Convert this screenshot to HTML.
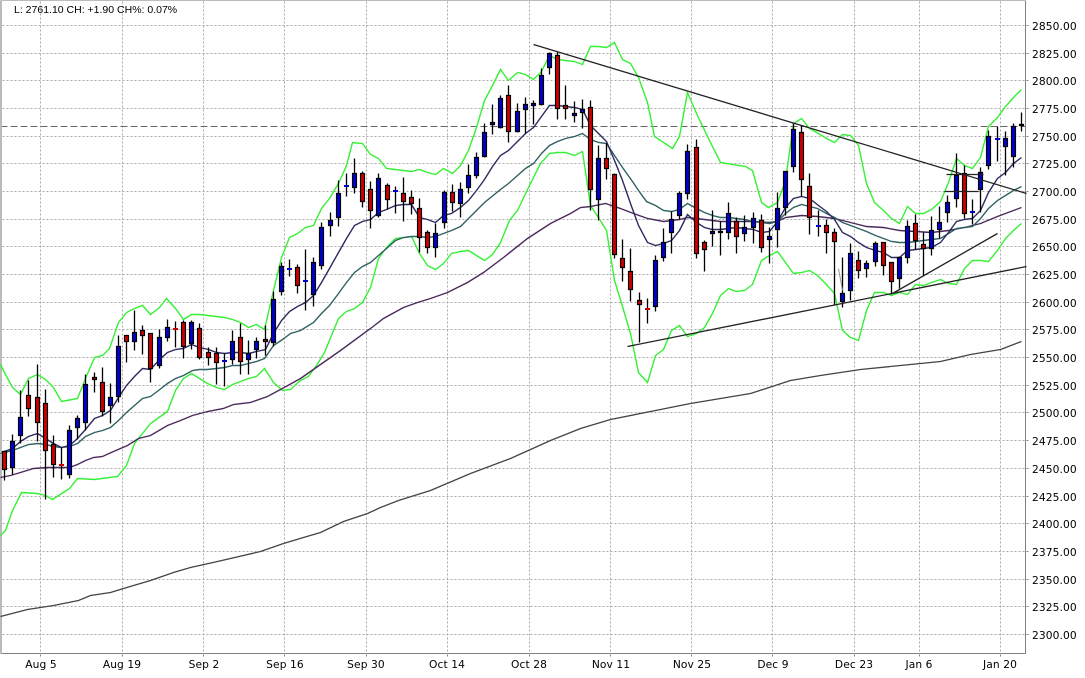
<!DOCTYPE html>
<html><head><meta charset="utf-8"><style>
html,body{margin:0;padding:0;background:#fff;width:1085px;height:678px;overflow:hidden}
svg{display:block}
text{fill:#000}
.a{font:10.67px "DejaVu Sans",sans-serif;letter-spacing:.1px}
.t{font:10.5px "Liberation Sans",sans-serif}
</style></head><body>
<svg width="1085" height="678" viewBox="0 0 1085 678" xmlns="http://www.w3.org/2000/svg">
<rect width="1085" height="678" fill="#fff"/>
<g transform="translate(.5 .5)" fill="none">
<path shape-rendering="crispEdges" stroke="#aaa" stroke-dasharray="2 2" d="M2 25H1025M2 53H1025M2 80H1025M2 108H1025M2 136H1025M2 163H1025M2 191H1025M2 219H1025M2 246H1025M2 274H1025M2 302H1025M2 329H1025M2 357H1025M2 385H1025M2 412H1025M2 440H1025M2 468H1025M2 496H1025M2 523H1025M2 551H1025M2 579H1025M2 606H1025M2 634H1025M40 1V653M122 1V653M203 1V653M284 1V653M366 1V653M447 1V653M529 1V653M610 1V653M691 1V653M772 1V653M854 1V653M919 1V653M1000 1V653"/>
<path shape-rendering="crispEdges" stroke="#666" stroke-dasharray="7 3" d="M0 126H1025"/>
<path shape-rendering="crispEdges" stroke="#808080" d="M1025 0V653H0M1026 25h2M1026 53h2M1026 80h2M1026 108h2M1026 136h2M1026 163h2M1026 191h2M1026 219h2M1026 246h2M1026 274h2M1026 302h2M1026 329h2M1026 357h2M1026 385h2M1026 412h2M1026 440h2M1026 468h2M1026 496h2M1026 523h2M1026 551h2M1026 579h2M1026 606h2M1026 634h2M40 654v2M122 654v2M203 654v2M284 654v2M366 654v2M447 654v2M529 654v2M610 654v2M691 654v2M772 654v2M854 654v2M919 654v2M1000 654v2"/>
<path shape-rendering="crispEdges" stroke="#bbb" d="M0 0V653M1 0V653M0 0H1025"/>

<polyline stroke="#35f035" stroke-width="1.4" points="0,364 4,372 12,387 20,394 28,378 37,374 45,379 53,387 61,401 69,399.5 77,398 85,378 94,357 102,355 109,348 118,322 126,312 134,308 142,305 150,314 159,307 166,298 175,308 183,319 191,314 199,314 207,315 216,316 224,317 232,319 240,322 248,327 256,324 264,329 270,303 273,290 281,257 289,237 297,233 305,227 313,225 321,208 329,198 338,183 346,165 352,142 362,143 370,154 378,158 386,168 395,169 403,170 411,171 419,169 427,172 435,174 443,168 452,173 460,165 468,150 476,127 484,100 492,85 500,69 508,80 517,72 525,74 533,79 541,71 549,55 557,59 565,60 574,61 582,64 590,46 598,46 606,47 614,42 622,59 630,63 638,77 647,102 654,136 672,148 679,136 687,92 696,113 708,138 720,162 745,166 752,170 761,202 768,207 777,202 785,180 793,123 801,118 809,128 818,133 826,138 834,142 842,134 850,135 858,145 866,183 874,202 883,210 891,218 899,223 907,206 915,213 923,213 931,209 940,201 948,182 956,158 964,165 972,168 980,157 988,126 997,117 1005,106 1013,97 1021,89"/>
<polyline stroke="#35f035" stroke-width="1.4" points="0,535 5,530 12,510 21,492 37,493 45,495 52,499 69,488 77,478 94,479 117,476 126,465 134,443 150,423 167,411 175,390 183,378 191,373 199,378 207,383 216,387 224,389 232,384 240,381 248,378 256,376 264,368 273,382 282,390 290,389 300,380 308,376 316,365 324,352 333,330 338,318 346,311 354,308 362,302 370,287 378,258 386,247 395,238 411,236 413,240 419,253 427,265 435,269 443,263 451,253 460,251 468,250 476,255 484,260 492,254 500,242 509,220 517,210 528,187 540,163 549,153 557,152 565,152 574,155 582,151 590,205 598,217 606,230 614,280 622,306 630,333 638,372 647,382 655,355 663,349 671,330 679,325 687,336 696,333 704,327 712,313 720,295 728,288 736,291 744,290 752,284 761,260 769,255 777,251 785,262 793,273 801,272 809,270 817,275 825,283 834,293 842,330 850,337 858,340 866,310 874,292 883,292 891,295 899,292 907,294 915,284 923,285 931,282 940,279 948,283 956,284 964,268 972,260 980,260 988,261 997,250 1005,238 1013,230 1021,223"/>

<polyline stroke="#444" stroke-width="1.3" points="0,616 27,609 53,605 78,600 90,595 110,592 123,588 150,580 173,572 190,567 217,561 260,551 283,543 303,537 320,532 343,521 367,513 380,507 398,500 430,490 470,473 510,458 550,440 580,428 610,419 650,411 690,403 720,398 750,393 790,380 820,375 860,369 900,365 940,361 970,354 1000,349 1021,341"/>

<polyline stroke="#4a2a5c" stroke-width="1.4" points="0,477 10,475 20,472 33,468 47,467 60,467 69,467 77,464 85,460 93,457 102,456 113,451 127,445 138,438 150,435 167,425 180,420 192,415 207,411 223,408 233,404 250,402 267,396 280,389 300,378 320,364 340,350 370,328 383,318 403,307 417,302 430,298 447,292 467,282 483,272 503,257 527,238 550,223 560,218 570,213 580,207 590,206 605,203 620,208 633,213 647,218 663,221 679,219 687,217 704,219 720,221 736,221 752,221 769,222 777,221 785,217 801,215 817,216 834,218 850,222 866,226 883,227 899,230 915,231 931,232 948,230 964,227 980,223 997,216 1013,210 1021,207"/>

<polyline stroke="#2f6062" stroke-width="1.4" points="0,453 4,452 12,450 20,447 28,444 37,443 45,444 53,446 61,447 69,446 77,443 85,436 94,432 102,430 110,427 118,420 126,412 134,405 142,398 150,396 158,390 167,383 175,378 183,375 192,370 199,369 207,369 216,368 224,367 232,365 240,365 248,363 256,361 264,358 273,345 282,339 290,333 300,330 313,322 321,313 329,305 338,293 346,282 354,272 362,266 370,262 378,255 386,248 395,240 403,237 411,236 419,236 427,237 435,236 443,233 451,230 460,226 468,218 476,210 484,202 500,189 508,183 517,175 525,168 533,163 541,153 549,145 557,141 565,138 574,136 582,133 590,139 598,142 606,143 614,155 622,167 632,181 638,190 646,201 655,205 663,210 671,211 679,209 687,203 696,208 704,212 712,215 720,217 728,217 736,218 744,219 752,221 761,222 769,223 777,221 785,213 793,207 801,204 809,206 817,208 826,213 834,217 842,222 850,225 858,228 866,231 875,235 883,238 891,241 899,242 907,242 915,241 923,240 931,239 940,238 948,233 956,228 964,227 972,226 980,218 988,208 997,200 1005,195 1013,190 1021,186"/>

<polyline stroke="#2c2a60" stroke-width="1.4" points="4,451 12,448 20,441 28,436 37,433 45,438 53,443 61,447 69,445 77,438 85,429 94,418 102,415 110,410 118,397 126,385 134,376 142,368 150,369 159,359 167,352 175,349 183,348 191,344 199,347 208,349 216,352 224,353 232,352 240,352 248,353 256,351 265,349 273,333 281,320 289,311 297,306 305,302 313,295 321,282 329,268 338,252 346,238 354,225 362,221 370,219 378,212 386,209 395,205 403,204 411,204 419,217 427,219 435,222 443,215 451,213 460,207 468,200 476,190 484,179 492,166 500,155 508,150 517,141 525,133 533,127 541,116 549,105 557,105 565,106 574,107 582,109 590,125 598,133 606,141 614,160 622,180 630,203 638,225 647,242 655,245 663,243 671,240 679,230 687,214 696,222 704,227 712,229 720,229 728,228 736,227 744,228 753,229 761,232 769,231 777,221 785,207 793,198 801,196 809,198 818,205 826,211 834,219 842,232 850,236 858,242 866,247 875,250 883,252 891,257 899,257 907,250 915,249 923,248 931,247 940,242 948,232 956,221 964,219 972,218 980,210 988,192 997,178 1005,172 1013,163 1021,157"/>

<g>
<path stroke="#000" stroke-width="1.3" d="M4 450V480M12 434V474M20 390V443M28 380V416M37 364V441M45 389V499M53 435V477M61 447V479M69 425V478M77 415V439M85 374V430M94 372V392M102 367V416M110 383V423M118 335V402M126 335V362M134 310V350M142 325V354M150 333V382M159 329V368M167 319V341M175 321V347M183 320V358M191 320V349M199 323V359M208 347V365M216 347V384M224 353V386M232 330V364M240 323V374M248 340V374M256 337V358M265 325V355M273 291V346M281 262V295M289 259V276M297 264V293M305 249V310M313 257V306M321 222V269M330 212V236M338 180V226M346 173V196M354 158V193M362 171V207M370 181V228M378 173V217M387 183V209M395 186V213M403 177V221M411 190V214M419 198V252M427 230V253M435 223V257M444 190V228M452 184V211M460 182V217M468 164V193M476 152V178M484 123V157M492 104V134M500 95V128M508 85V142M517 103V132M525 97V133M533 100V124M541 68V105M549 52V74M557 52V119M565 85V119M574 101V122M582 99V128M590 100V210M598 145V220M606 143V179M614 173V258M622 239V281M630 248V301M639 292V342M647 298V323M655 255V311M663 228V261M671 211V253M679 191V219M687 144V199M696 139V258M704 240V271M712 210V246M720 221V255M728 202V239M736 217V253M744 215V241M753 212V243M761 214V252M769 227V263M777 192V247M785 171V215M793 123V172M801 125V196M809 173V234M818 210V236M826 219V253M834 228V305M842 257V307M850 243V300M858 251V278M866 260V277M875 241V266M883 242V275M891 262V294M899 256V288M907 220V263M915 214V249M923 232V275M931 216V255M939 206V238M947 195V222M956 153V207M964 165V218M972 199V224M980 167V212M988 130V169M997 126V161M1005 131V175M1013 123V167M1021 112V131"/>
<path fill="#cc0000" stroke="#000" stroke-width="1.15" d="M2 451h4V469h-4zM26 395h4V408h-4zM35 397h4V422h-4zM43 403h4V450h-4zM51 444h4V464h-4zM92 377h4V379h-4zM100 382h4V411h-4zM124 335h4V341h-4zM140 330h4V335h-4zM148 333h4V368h-4zM181 322h4V346h-4zM197 328h4V357h-4zM206 352h4V357h-4zM214 353h4V362h-4zM238 337h4V361h-4zM263 339h4V341h-4zM295 267h4V285h-4zM360 173h4V201h-4zM368 189h4V210h-4zM385 185h4V199h-4zM401 193h4V201h-4zM409 197h4V203h-4zM417 208h4V237h-4zM425 232h4V247h-4zM450 192h4V202h-4zM506 95h4V131h-4zM555 55h4V108h-4zM563 105h4V108h-4zM588 107h4V189h-4zM604 158h4V168h-4zM612 174h4V254h-4zM620 258h4V267h-4zM628 271h4V289h-4zM637 300h4V304h-4zM694 147h4V253h-4zM702 242h4V249h-4zM734 221h4V236h-4zM759 220h4V247h-4zM799 132h4V179h-4zM807 186h4V217h-4zM824 225h4V232h-4zM832 232h4V241h-4zM856 260h4V270h-4zM881 242h4V265h-4zM889 262h4V281h-4zM913 223h4V240h-4zM921 244h4V248h-4zM962 173h4V213h-4z"/>
<path fill="#0000cc" stroke="#000" stroke-width="1.15" d="M10 441h4V467h-4zM18 417h4V435h-4zM67 430h4V474h-4zM75 418h4V427h-4zM83 384h4V422h-4zM108 397h4V405h-4zM116 346h4V396h-4zM132 332h4V341h-4zM157 337h4V365h-4zM165 327h4V337h-4zM189 322h4V343h-4zM230 341h4V359h-4zM246 353h4V359h-4zM254 341h4V349h-4zM271 299h4V342h-4zM279 266h4V291h-4zM311 262h4V294h-4zM319 227h4V265h-4zM328 220h4V225h-4zM336 193h4V217h-4zM352 173h4V187h-4zM376 178h4V215h-4zM433 233h4V247h-4zM442 192h4V222h-4zM458 189h4V203h-4zM466 175h4V187h-4zM474 157h4V175h-4zM482 132h4V156h-4zM490 122h4V124h-4zM498 98h4V127h-4zM515 111h4V131h-4zM523 104h4V109h-4zM531 103h4V105h-4zM539 75h4V104h-4zM547 53h4V67h-4zM572 113h4V115h-4zM580 109h4V112h-4zM596 158h4V199h-4zM653 260h4V306h-4zM661 242h4V257h-4zM669 219h4V232h-4zM677 193h4V215h-4zM685 151h4V193h-4zM710 231h4V233h-4zM718 231h4V232h-4zM726 213h4V232h-4zM742 227h4V233h-4zM751 218h4V227h-4zM767 236h4V239h-4zM775 208h4V229h-4zM783 171h4V207h-4zM791 129h4V166h-4zM840 293h4V301h-4zM848 253h4V290h-4zM864 263h4V268h-4zM873 243h4V261h-4zM897 257h4V278h-4zM905 226h4V257h-4zM929 230h4V248h-4zM937 222h4V229h-4zM945 202h4V212h-4zM954 175h4V198h-4zM978 172h4V189h-4zM986 136h4V165h-4zM1003 138h4V146h-4zM1011 126h4V156h-4zM1019 124h4V125h-4z"/>
<path fill="#cc0000" stroke="none" d="M58.500 463.500h5v2h-5zM172.500 327.500h5v2h-5zM644.500 307.500h5v2h-5z"/>
<path fill="#0000cc" stroke="none" d="M221.500 359.500h5v2h-5zM286.500 267.500h5v2h-5zM302.500 279.500h5v2h-5zM343.500 184.500h5v2h-5zM392.500 189.500h5v2h-5zM815.500 224.500h5v2h-5zM969.500 210.500h5v2h-5zM994.500 137.500h5v2h-5z"/>
</g>
<path stroke="#999" d="M838 268L842 290"/>
<g stroke="#222" stroke-width="1.3">
<path d="M533 44L1026 193"/>
<path d="M627 346L1026 266"/>
<path d="M892 293L997 233"/>
<path d="M946 174H983"/>
<path d="M944 191H978"/>
</g>
</g>
<text class="t" x="14" y="13">L: 2761.10 CH: +1.90 CH%: 0.07%</text>
<g class="a">
<text x="1032" y="30">2850.00</text><text x="1032" y="58">2825.00</text><text x="1032" y="85">2800.00</text><text x="1032" y="113">2775.00</text><text x="1032" y="141">2750.00</text><text x="1032" y="168">2725.00</text><text x="1032" y="196">2700.00</text><text x="1032" y="224">2675.00</text><text x="1032" y="251">2650.00</text><text x="1032" y="279">2625.00</text><text x="1032" y="307">2600.00</text><text x="1032" y="334">2575.00</text><text x="1032" y="362">2550.00</text><text x="1032" y="390">2525.00</text><text x="1032" y="417">2500.00</text><text x="1032" y="445">2475.00</text><text x="1032" y="473">2450.00</text><text x="1032" y="501">2425.00</text><text x="1032" y="528">2400.00</text><text x="1032" y="556">2375.00</text><text x="1032" y="584">2350.00</text><text x="1032" y="611">2325.00</text><text x="1032" y="639">2300.00</text>
</g>
<g class="a" text-anchor="middle">
<text x="41" y="668">Aug 5</text><text x="122" y="668">Aug 19</text><text x="204" y="668">Sep 2</text><text x="285" y="668">Sep 16</text><text x="366" y="668">Sep 30</text><text x="447" y="668">Oct 14</text><text x="529" y="668">Oct 28</text><text x="611" y="668">Nov 11</text><text x="692" y="668">Nov 25</text><text x="773" y="668">Dec 9</text><text x="854" y="668">Dec 23</text><text x="919" y="668">Jan 6</text><text x="1000" y="668">Jan 20</text>
</g>
</svg>
</body></html>
